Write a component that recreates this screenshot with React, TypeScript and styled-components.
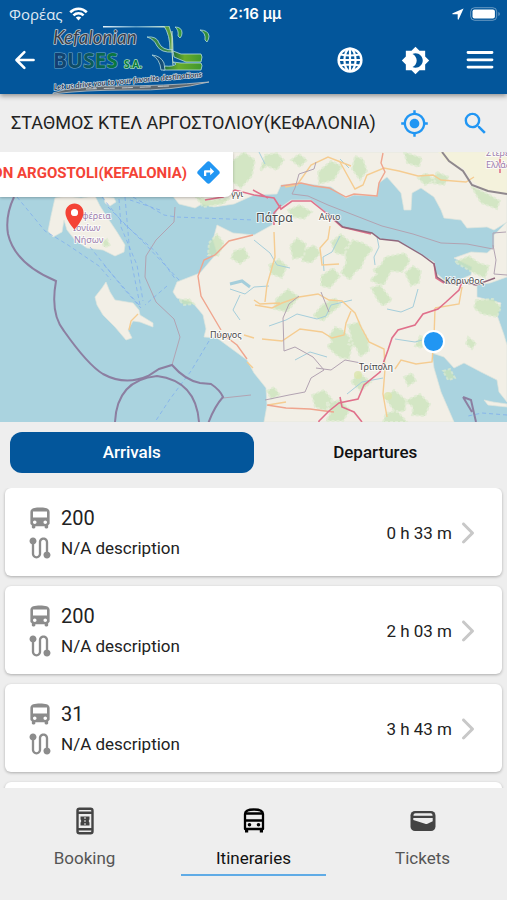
import React, { useState } from "react";
import styled, { createGlobalStyle } from "styled-components";
import { IoArrowBack } from "react-icons/io5";
import { IoIosArrowForward, IoMdBus } from "react-icons/io";
import {
  MdBrightness4,
  MdDirections,
  MdLocationOn,
  MdMyLocation,
  MdRoute,
  MdSearch,
} from "react-icons/md";

const GlobalStyle = createGlobalStyle`
  *, *::before, *::after { box-sizing: border-box; }
  body { margin: 0; background: #eeeeee; font-family: Roboto, "Noto Sans", sans-serif; color: #222; }
  button { font: inherit; color: inherit; border: 0; padding: 0; background: none; cursor: pointer; }
  h1, p { margin: 0; }
`;

const Screen = styled.div`
  display: flex;
  flex-direction: column;
  height: 100vh;
  overflow: hidden;
`;

const TopArea = styled.header`
  flex: none;
  color: #fff;
  background: #03569b;
  box-shadow: 0 2px 5px rgba(0, 0, 0, 0.4);
  z-index: 2;
`;

const StatusBar = styled.div`
  display: grid;
  grid-template-columns: 1fr auto 1fr;
  align-items: center;
  height: 26px;
  padding: 2px 6px 0 9px;
  font-size: 15px;
  line-height: 20px;
`;

const Carrier = styled.span`
  display: flex;
  align-items: center;
  gap: 6px;
  font-family: "Open Sans", sans-serif;
  color: #dfe9f3;
`;

const Clock = styled.time`
  font-family: Inter, sans-serif;
  font-weight: 600;
`;

const StatusIcons = styled.span`
  display: flex;
  align-items: center;
  justify-content: flex-end;
  gap: 6px;
`;

const Toolbar = styled.div`
  display: flex;
  align-items: center;
  height: 68px;
  padding: 0 13px 0 11px;
`;

const Logo = styled.svg`
  flex: none;
  width: 162px;
  height: 68px;
  margin-left: 11px;
`;

const Actions = styled.div`
  display: flex;
  align-items: center;
  gap: 36px;
  margin-left: auto;
`;

const IconButton = styled.button<{ $tone?: string }>`
  display: flex;
  flex: none;
  color: ${(p) => p.$tone ?? "inherit"};
`;

const StationBar = styled.section`
  display: flex;
  flex: none;
  align-items: center;
  height: 58px;
  padding: 0 17px 0 11px;
`;

const StationName = styled.h1`
  flex: 1;
  font-size: 18px;
  font-weight: 400;
  line-height: 24px;
  white-space: nowrap;
`;

const StationActions = styled.div`
  display: flex;
  align-items: center;
  gap: 32px;
`;

const MapPanel = styled.section`
  position: relative;
  flex: none;
  height: 270px;
  overflow: hidden;
  background: #aad3df;
`;

const MapDrawing = styled.svg`
  display: block;
  width: 100%;
  height: 100%;
`;

const StopCallout = styled.div`
  position: absolute;
  top: 0;
  left: 0;
  display: flex;
  align-items: center;
  justify-content: flex-end;
  gap: 8px;
  width: 233px;
  height: 45px;
  padding: 0 11px 4px 0;
  overflow: hidden;
  border-radius: 0 0 8px 0;
  background: #fff;
  box-shadow: 0 1px 3px rgba(0, 0, 0, 0.25);
  color: #f44336;
  font-size: 15px;
  font-weight: 700;
  line-height: 20px;
  white-space: nowrap;
`;

const StopPin = styled.span`
  position: absolute;
  top: 49px;
  left: 59px;
  display: flex;
  color: #f44336;
`;

const PinHole = styled.span`
  position: absolute;
  top: 8px;
  left: 12px;
  width: 7px;
  height: 7px;
  border-radius: 50%;
  background: #fff;
`;

const UserDot = styled.span`
  position: absolute;
  top: 178px;
  left: 422px;
  width: 23px;
  height: 23px;
  border: 2px solid #fff;
  border-radius: 50%;
  background: #2196f3;
`;

const Tabs = styled.div`
  display: grid;
  grid-template-columns: 1fr 1fr;
  flex: none;
  padding: 10px 10px 15px;
`;

const Tab = styled.button<{ $active: boolean }>`
  && {
    height: 41px;
    padding-bottom: 2px;
    border-radius: 12px;
    background: ${(p) => (p.$active ? "#03569b" : "transparent")};
    color: ${(p) => (p.$active ? "#fff" : "#111")};
    font-size: 17px;
    font-weight: 500;
    line-height: 20px;
  }
`;

const TripList = styled.ul`
  display: flex;
  flex: 1;
  flex-direction: column;
  gap: 10px;
  min-height: 0;
  margin: 0;
  padding: 0 5px;
  overflow: hidden;
  list-style: none;
`;

const TripItem = styled.li`
  flex: none;
`;

const TripCard = styled.button`
  && {
    display: flex;
    align-items: center;
    justify-content: space-between;
    width: 100%;
    height: 88px;
    padding: 2px 18px 0 21px;
    border-radius: 6px;
    background: #fff;
    box-shadow: 0 1px 3px rgba(0, 0, 0, 0.28);
    text-align: left;
  }
`;

const TripInfo = styled.span`
  display: grid;
  gap: 6px;
`;

const TripLine = styled.span<{ $size: number }>`
  display: flex;
  align-items: center;
  gap: 7px;
  font-size: ${(p) => p.$size}px;
  line-height: 24px;

  svg {
    width: 28px;
    height: 28px;
    margin: -2px 0;
    color: #8c8c8c;
  }
`;

const TripWait = styled.span`
  display: flex;
  align-items: center;
  font-size: 17px;
  line-height: 24px;

  svg {
    color: #c8c8c8;
  }
`;

const BottomNav = styled.nav`
  display: grid;
  grid-template-columns: repeat(3, 1fr);
  flex: none;
  height: 112px;
  padding: 18px 0 24px;
  background: #eeeeee;
`;

const NavItem = styled.button<{ $active: boolean }>`
  && {
    display: flex;
    flex-direction: column;
    align-items: center;
    gap: 10px;
    margin: 0 12px;
    border-bottom: 2px solid ${(p) => (p.$active ? "#5fabe6" : "transparent")};
    color: ${(p) => (p.$active ? "#111" : "#555")};
    font-size: 17px;
    line-height: 24px;
  }
`;

const WifiIcon = () => (
  <svg width="19" height="14" viewBox="0 0 19 14" fill="none" stroke="#fff" strokeWidth="2.6" aria-hidden="true">
    <path d="M1.2 5.2C6 .6 13 .6 17.8 5.2" />
    <path d="M4.4 8.4C7.4 5.6 11.6 5.6 14.6 8.4" />
    <path d="M9.5 13.4 6.8 10.5c1.6-1.4 3.8-1.4 5.4 0z" fill="#fff" stroke="none" />
  </svg>
);

const LocationArrow = () => (
  <svg width="12" height="12" viewBox="0 0 12 12" fill="#fff" aria-hidden="true">
    <path d="M11.6.4.7 5.3c-.6.3-.4 1 .2 1h4.8v4.8c0 .6.8.8 1 .2z" />
  </svg>
);

const BatteryIcon = () => (
  <svg width="31" height="14" viewBox="0 0 31 14" fill="none" aria-hidden="true">
    <rect x=".7" y=".7" width="26" height="12.6" rx="4" stroke="#fff" strokeOpacity=".4" />
    <rect x="2.5" y="2.5" width="22.4" height="9" rx="2" fill="#fff" />
    <path d="M28.5 5v4c1.6-.6 1.6-3.4 0-4z" fill="#fff" fillOpacity=".5" />
  </svg>
);

const GlobeIcon = () => (
  <svg width="30" height="30" viewBox="0 0 30 30" fill="none" stroke="#fff" strokeWidth="2.2" aria-hidden="true">
    <circle cx="15" cy="15" r="11.400" strokeWidth="2.400" />
    <ellipse cx="15" cy="15" rx="5.600" ry="11.400" />
    <path d="M15 3.500v23M3.500 15h23M5.500 9.500q9.500 2 19 0M5.500 20.500q9.500-2 19 0" />
  </svg>
);

const MenuIcon = () => (
  <svg width="28" height="20" viewBox="0 0 28 20" stroke="#fff" strokeWidth="2.8" strokeLinecap="round" aria-hidden="true">
    <path d="M2 2.5h24M2 9.8h24M2 17.1h24" />
  </svg>
);

const BookingIcon = () => (
  <svg width="30" height="30" viewBox="0 0 30 30" fill="none" stroke="#444" strokeWidth="2.400" aria-hidden="true">
    <rect x="7.500" y="2.800" width="15" height="24.400" rx="2" />
    <path d="M7.500 6.800h15M7.500 23.200h15" strokeWidth="2.600" />
    <path d="M10.500 10.500h9v2.800q-1.600 1.700 0 3.400v2.800h-9v-2.800q1.600-1.700 0-3.400z" fill="#444" stroke="none" />
    <path d="M15 11v2m0 1v2m0 1v2" stroke="#eee" strokeWidth="1" />
  </svg>
);

const TransitIcon = () => (
  <svg width="30" height="30" viewBox="0 0 30 30" fill="none" stroke="#000" strokeWidth="2.3" aria-hidden="true">
    <path d="M6 23V8q0-4.500 9-4.500T24 8v15z" strokeLinejoin="round" />
    <path d="M7 7.500h16M6 14.500h18" />
    <path d="M7.600 23v3.500M22.400 23v3.500" strokeWidth="3.200" />
    <circle cx="10.500" cy="18.700" r="1.800" fill="#000" stroke="none" />
    <circle cx="19.500" cy="18.700" r="1.800" fill="#000" stroke="none" />
  </svg>
);

const WalletIcon = () => (
  <svg width="30" height="30" viewBox="0 0 30 30" aria-hidden="true">
    <rect x="2.500" y="5" width="25" height="20" rx="4.500" fill="#444" />
    <path d="M5.500 9q0-1.800 2-1.800h15q2 0 2 1.800v.7h-19z" fill="#eee" />
    <path d="M5.300 12h19.400v3.300l-5.200 2.400q-1.200.5-2.400.1L5.300 14z" fill="#eee" />
  </svg>
);

const BrandLogo = () => (
  <Logo viewBox="0 0 162 68" role="img" aria-label="Kefalonian Buses S.A.">
    <defs>
      <linearGradient id="brandInk" x1="0" x2="1">
        <stop offset="0" stopColor="#123c75" />
        <stop offset=".5" stopColor="#0d5560" />
        <stop offset="1" stopColor="#087a3c" />
      </linearGradient>
      <linearGradient id="leaf" x1="0" x2="1">
        <stop offset="0" stopColor="#1c6a3c" />
        <stop offset=".4" stopColor="#69ac2b" />
        <stop offset="1" stopColor="#3f972c" />
      </linearGradient>
      <linearGradient id="roof" x1="0" x2="1">
        <stop offset="0" stopColor="#e6f3fa" />
        <stop offset=".5" stopColor="#5f9fc6" />
        <stop offset="1" stopColor="#d5ecd9" />
      </linearGradient>
    </defs>
    <path d="M53 0h66v1.500H53z" fill="url(#roof)" />
    <g stroke="#b4dbe0" strokeWidth=".8">
      <path d="M114 0h5q5 11 4 24h-3q0-15-6-24z" fill="#5b9e3b" />
      <path d="M97 11q10-1 12 6 3 7 14 7v2q-12 1-16-6-3-7-10-9z" fill="#398846" />
      <path d="M125 1q7 0 7 6 0 3-2 5l-2-2q1-6-3-9z" fill="#3a9a38" />
      <path d="M150 4q8 0 9 6 0 3-2 6l-2-2q1-7-5-10z" fill="#348f38" />
      <path d="M123 25l8 3h20q2 2 0 8h-15l-12-5z" fill="url(#leaf)" />
      <path d="M123 36l8 1h20q2 2 0 7h-38l2-4q8 1 11-2z" fill="url(#leaf)" />
      <path d="M102 29q9 1 12 8l1 7h-4q-1-11-9-15z" fill="#164e77" />
    </g>
    <path d="M122 5v20l1 14" fill="none" stroke="#cbe5c8" strokeWidth="1" />
    <g paintOrder="stroke" strokeLinejoin="round">
      <text x="3" y="18" fontFamily="Lato" fontStyle="italic" fontSize="19" fill="#3a3e49" stroke="#c3ced6" strokeWidth="1.5" paintOrder="stroke">Kefalonian</text>
      <text x="3" y="42" fontFamily="Open Sans" fontWeight="700" fontSize="21" fill="url(#brandInk)" stroke="#6fa4c5" strokeWidth="1.2">BUSES</text>
      <text x="74" y="42" fontFamily="Open Sans" fontWeight="700" fontSize="10" fill="#087a3c" stroke="#a9dcbc" strokeWidth="1.5">S.A.</text>
    </g>
    <path d="M3 67Q25 59 65 60q50 0 94-4-36 9-80 8-46 0-76 4z" fill="#5f686f" stroke="#bcc4c9" strokeWidth=".8" />
    <path d="M36 63q40-1 83-3" stroke="#d9dddf" strokeDasharray="11 7" fill="none" strokeWidth=".8" />
    <text x="4" y="64" transform="rotate(-5 4 64)" fontFamily="Lato" fontStyle="italic" fontWeight="700" fontSize="8" fill="#33435a" stroke="#d9e4eb" strokeWidth="1.2" paintOrder="stroke">Let us drive you to your favorite destinations</text>
  </Logo>
);

const woods = [
  "M265 3l12-2 7 7-7 10-10-4-7 5zM291 8l8-6 8 6-7 7zM318 20l13-11 11 5-8 14-15 4zM355 4l8 3 4 12-7 9-8-11zM404 0l18 6-3 9-12-4zM437 20l12 5-5 8-13-2zM471 34l17 8 12 7-3 8-16-6zM418 26l8-5 9 8-10 4z",
  "M232 9l12-9 11 8-3 16-11 12-9-6zM196 45l14 3 20-2-7 6-20 3zM209 91l8-9 7 9-6 13-10-1zM234 99l10-3 5 9-9 7-9-6z",
  "M288 58l12-5 12 7-8 7-12-2zM302 99l12-6 7 8-10 10-9-2zM331 90l10-8 10 9-7 12-9-2zM345 97l8-9 10 3 10 6-8 9-4 10-6 4-5 8-9-7 5-10zM373 118l8-5 4-8 20-4 5 8-8 11-11-1-7 14-6-1-8-4 7-6zM321 124l12-8 7 8-10 12-9-2zM405 121l8-7 8 5-2 12-8 3z",
  "M269 113l10-6 8 7-5 12-11-4zM290 94l7-8 9 6-2 13-11 2zM276 147l12-10 11 8-12 15-13-3zM329 184l6-9 8 3 10 11-4 18-8-1-6-4-8-8 5-4zM348 173l11-3 3 7 6 10 1 12-9 6-4-10-8-3 3-8zM322 153l13-7 6 7-10 8-8 8-10-5z",
  "M312 243l12-5 8 9-6 12-11-4zM326 251l14-3 10 10-7 11h-17l5-9zM351 230l8-9 12 9-10 9zM385 246l9-8 12 10-1 11-10 1zM405 249l15-7 10 10-5 12-13-1 1-8zM386 261l11-2 10 11h-24zM267 239l7-4 6 8-9 4z",
  "M371 136l9-3 12 15-9 6-5-5zM455 110l14-6 10 7 10 3-4 12-13-6zM476 148l17-1 8 8-4 10-15-3-8-6zM404 225l8-4 4 8-8 5zM420 184l8 3-6 9-7-2zM468 185l8 6-4 6-6-5zM443 219l7-2 5 9-7 2zM102 89l5-2 3 7-6 1zM179 148l10-1 5 5-10 1z",
];

const KEFALONIA_SHAPE =
  "M55 46l11-2 15 2 14-2 5 10 7 11 10 15 8 13-1 7-9 4-12-6-16-2-12-8-8-10-3-10-2 12-9 5-5-6 3-15z";

const RegionMap = () => (
  <MapDrawing viewBox="0 0 507 270" preserveAspectRatio="xMidYMid slice" role="img" aria-label="Map of Kefalonia and the Peloponnese">
    <rect width="507" height="270" fill="#aad3df" />
    <g fill="#f2efe6" stroke="#dfe5dc" strokeWidth=".7">
      <path d="M173 0h334v70l-13 8-7-3-20 1-6-8-17-2-3-8-7-13-13-9-9 5-1 17h-7l-3-17-14-16-8 6-2 13-23-1-8 3-15-11-30-4-20 2-4 9-23 1-20 9-20 3-12-3-7 4-16-4-7-9z" />
      <path d="M217 73l16 8 21 2 18-10 5-15 14-10h20l15 13 16 14 29 6 8 6 18 2 24 14 13 7 2 11 8 7 10 2 17-7 1-8-18-9 17-6 16 1 7-6V83l13-13v55l-17 6-13 2v12l24 6-4 12 7 20 3 10v57l-8-10-2-12-16-8-17-9-10 5-10-11-12-4 2 15 7 24 13 30H264l3-17-1-17-12-15-7-13-30-22-13-1 2-8-3-14-10-12-16-5-4-6 4-10 23-9 17-20-4-13z" />
      <path d={KEFALONIA_SHAPE} />
      <path d="M104 45l10 1 2 4-6 4-5-3zM106 130l4 10 5 8 18 3 6 7 1 5 13 8v4l-13-5-7-1-5 9 4 8-6 2-11-13-12-12-6-10-2-8 7-9zM484 248l9 2 14 2v3l-19-2z" />
    </g>
    <path d="M438 0h69v41l-21-2-14-10-9-13-17-7z" fill="#f4f2d9" opacity=".8" />
    <g fill="#c9e3b9" stroke="#dcebcf" strokeWidth="2" strokeDasharray="3 2" opacity=".75">
      {woods.map((shape) => (
        <path key={shape} d={shape} />
      ))}
    </g>
    <g fill="#dce6ad" opacity=".8">
      <circle cx="358" cy="223" r="4" />
      <circle cx="388" cy="244" r="4" />
    </g>
    <g fill="none" stroke="#a5cedb" strokeWidth="1">
      <path d="M254 88l16 13 7 12 13 3M340 84l-8 16-9 5 1 14M377 85l2 10-5 10 1 8M269 174l17-6 11-6 20 5 9-3 5-11 21-5M230 137l15 5 9-7 15-1M418 137l-5 18-12 5-14-3M295 208l15-8 17 5M240 143l-7 15 7 10M426 187l-11 3-20-3M347 242l15-12 21-4M259 0l6 12M340 7l9 9" />
      <path d="M230 132l12-3 8 6" strokeWidth="3" />
    </g>
    <g fill="none" stroke="#f5cc91" strokeWidth="1.400">
      <path d="M274 80l1 25-8 28-2 17M330 74l-2 13-8 9 2 17 17-1M340 10l15 27 8-4 4-10 17-7 15 3 19 5 15-1 8 5 25 2 8-5M255 153l17 3 10-5 17-6 19-3 11 6 13 1 13 12 6 14 8 15 15 7 1 20-2 25 4 23M262 187l20 2 18-12 22 3 10 6 12-3 2-12 5-12M395 217l6-9 15 4 16-2 2-24 1-30M435 156l24-4 3-17M268 253l18-3M244 183l10 3M247 210l6 6M254 148l6 4 20-1" />
      <path d="M129 178l2-9 7-7" />
      <path d="M285 35l12-2 14-20 17-8 23 9" />
    </g>
    <g fill="none" stroke="#efa58e" strokeWidth="1.400">
      <path d="M253 83l-24 6-14 14-11 5-6 16 3 20 10 17 10 17M217 183l8 1 12 9 10 14M267 253l19 3 24 1 15 2 9 1M281 34l20-3 13 3 15 2 17 9 8-3 23 2 2-13 6-11-4-9 2-10" />
    </g>
    <g fill="none" stroke="#e0708b" strokeWidth="1.600">
      <path d="M205 48l18-3 12-7 19 5 20 3 7 11 11-8h19l15 12 16 14 29 7M274 73v-12l7-8M253 38l15 8M462 130l-3 8-13 12-8 7-15 5-8 11-17 5-6 8-4 12-8 22-16 13-6 14-19 4-10 8-10 10-2 16M340 245l2 10 12 5 8 10M434 111l2 15 8 5M500 3v18" />
    </g>
    <g fill="none" stroke="#91677c" strokeWidth="1.400">
      <path d="M327 61l16 14 29 6 8 6 18 2 24 14 12 9 3 13 9 6 8 1 8-2 14 3 19-7" />
      <path d="M442 0l7 9 14 10 9 14 16 6 19 3" stroke="#8f888d" strokeWidth="2" />
    </g>
    <g fill="none" stroke="#b2a3b2" strokeWidth="1">
      <path d="M316 10l-2 7-15 5-4 14-3 6 16 2 20 9 54 21 31 8 28 9 26 1 26 5V81l13-1M493 93l3 15-2 14 13 1" />
      <path d="M299 144l-10 8-6 14 1 33 11-4 18 10 11 13-13 8-6 14-16 3-24 5M175 55l-1 15-18 18-10 16-1 21 11 25 18 17 6 18-8 28" />
      <path d="M223 246l28-3M316 216l15 2 14-10 16 3M321 140l8 20" />
    </g>
    <g fill="none" stroke="#7aaaf0" strokeWidth="1" strokeDasharray="4 3" opacity=".7">
      <path d="M17 45l28 34 23 14 31 21 12 14M108 55l38 38 34 36M119 47l2 28 16 38 6 36M125 45l5 58 10 50M102 45l20 25 34 30 20 28M133 45l31 18 12 2 78 3M167 134l-22 19M104 113l13 15 22 25M209 189l-18 30-21 28-15 23M160 58l-30-10M90 95l34 42 17 19" />
      <path d="M507 263l-25-2-14 3" />
    </g>
    <g fill="none" stroke="#8c7fa1" strokeWidth="2">
      <path d="M14 45Q5 64 8 82q7 30 48 47-6 33 8 50 24 34 39 43 22 12 45 2l11-7 13-4q13 15 28 18l11 1q9 6 12 13-9 10-15 27" />
      <path d="M115 270q2-42 42-46 39 5 42 46" />
      <path d="M463 245l8 3 5 22M463 245l9 15" />
    </g>
    <g fontFamily="Noto Sans" stroke="#fff" strokeOpacity=".75" strokeWidth="2" paintOrder="stroke" strokeLinejoin="round">
      <g fill="#4a4a4a">
        <text x="256" y="70" fontSize="12">Πάτρα</text>
        <text x="319" y="68" fontSize="9">Αίγιο</text>
        <text x="445" y="132" fontSize="9">Κόρινθος</text>
        <text x="210" y="186" fontSize="9">Πύργος</text>
        <text x="359" y="218" fontSize="9">Τρίπολη</text>
        <text x="231" y="45" fontSize="9">γγι</text>
      </g>
      <g fill="#9d7eae" fontSize="9">
        <text x="82" y="67">φέρεια</text>
        <text x="73" y="79">Ιονίων</text>
        <text x="74" y="91">Νήσων</text>
        <text x="486" y="4">Στερεά</text>
        <text x="486" y="16">Ελλάδα</text>
      </g>
    </g>
  </MapDrawing>
);

const trips = [
  { line: "200", description: "N/A description", wait: "0 h 33 m" },
  { line: "200", description: "N/A description", wait: "2 h 03 m" },
  { line: "31", description: "N/A description", wait: "3 h 43 m" },
  { line: "", description: "", wait: "" },
];

const sections = [
  { label: "Booking", icon: <BookingIcon /> },
  { label: "Itineraries", icon: <TransitIcon /> },
  { label: "Tickets", icon: <WalletIcon /> },
];

export default function App() {
  const [tab, setTab] = useState("Arrivals");
  const [section, setSection] = useState("Itineraries");

  return (
    <Screen>
      <GlobalStyle />
      <TopArea>
        <StatusBar>
          <Carrier>
            Φορέας <WifiIcon />
          </Carrier>
          <Clock>2:16 μμ</Clock>
          <StatusIcons>
            <LocationArrow />
            <BatteryIcon />
          </StatusIcons>
        </StatusBar>
        <Toolbar>
          <IconButton aria-label="Back">
            <IoArrowBack size={28} />
          </IconButton>
          <BrandLogo />
          <Actions>
            <IconButton aria-label="Language">
              <GlobeIcon />
            </IconButton>
            <IconButton aria-label="Theme">
              <MdBrightness4 size={29} />
            </IconButton>
            <IconButton aria-label="Menu">
              <MenuIcon />
            </IconButton>
          </Actions>
        </Toolbar>
      </TopArea>

      <StationBar>
        <StationName>ΣΤΑΘΜΟΣ ΚΤΕΛ ΑΡΓΟΣΤΟΛΙΟΥ(ΚΕΦΑΛΟΝΙΑ)</StationName>
        <StationActions>
          <IconButton aria-label="My location" $tone="#2196f3">
            <MdMyLocation size={29} />
          </IconButton>
          <IconButton aria-label="Search" $tone="#2196f3">
            <MdSearch size={29} />
          </IconButton>
        </StationActions>
      </StationBar>

      <MapPanel>
        <RegionMap />
        <StopPin>
          <MdLocationOn size={31} />
          <PinHole />
        </StopPin>
        <UserDot />
        <StopCallout>
          ON ARGOSTOLI(KEFALONIA)
          <IconButton aria-label="Directions" $tone="#2196f3">
            <MdDirections size={27} />
          </IconButton>
        </StopCallout>
      </MapPanel>

      <Tabs role="tablist">
        {["Arrivals", "Departures"].map((name) => (
          <Tab key={name} role="tab" aria-selected={tab === name} $active={tab === name} onClick={() => setTab(name)}>
            {name}
          </Tab>
        ))}
      </Tabs>

      <TripList>
        {trips.map((trip, index) => (
          <TripItem key={index}>
            <TripCard>
              {trip.line && (
                <>
                  <TripInfo>
                    <TripLine $size={20}>
                      <IoMdBus />
                      {trip.line}
                    </TripLine>
                    <TripLine $size={17}>
                      <MdRoute />
                      {trip.description}
                    </TripLine>
                  </TripInfo>
                  <TripWait>
                    {trip.wait}
                    <IoIosArrowForward size={32} />
                  </TripWait>
                </>
              )}
            </TripCard>
          </TripItem>
        ))}
      </TripList>

      <BottomNav>
        {sections.map(({ label, icon }) => (
          <NavItem key={label} $active={section === label} onClick={() => setSection(label)}>
            {icon}
            {label}
          </NavItem>
        ))}
      </BottomNav>
    </Screen>
  );
}
